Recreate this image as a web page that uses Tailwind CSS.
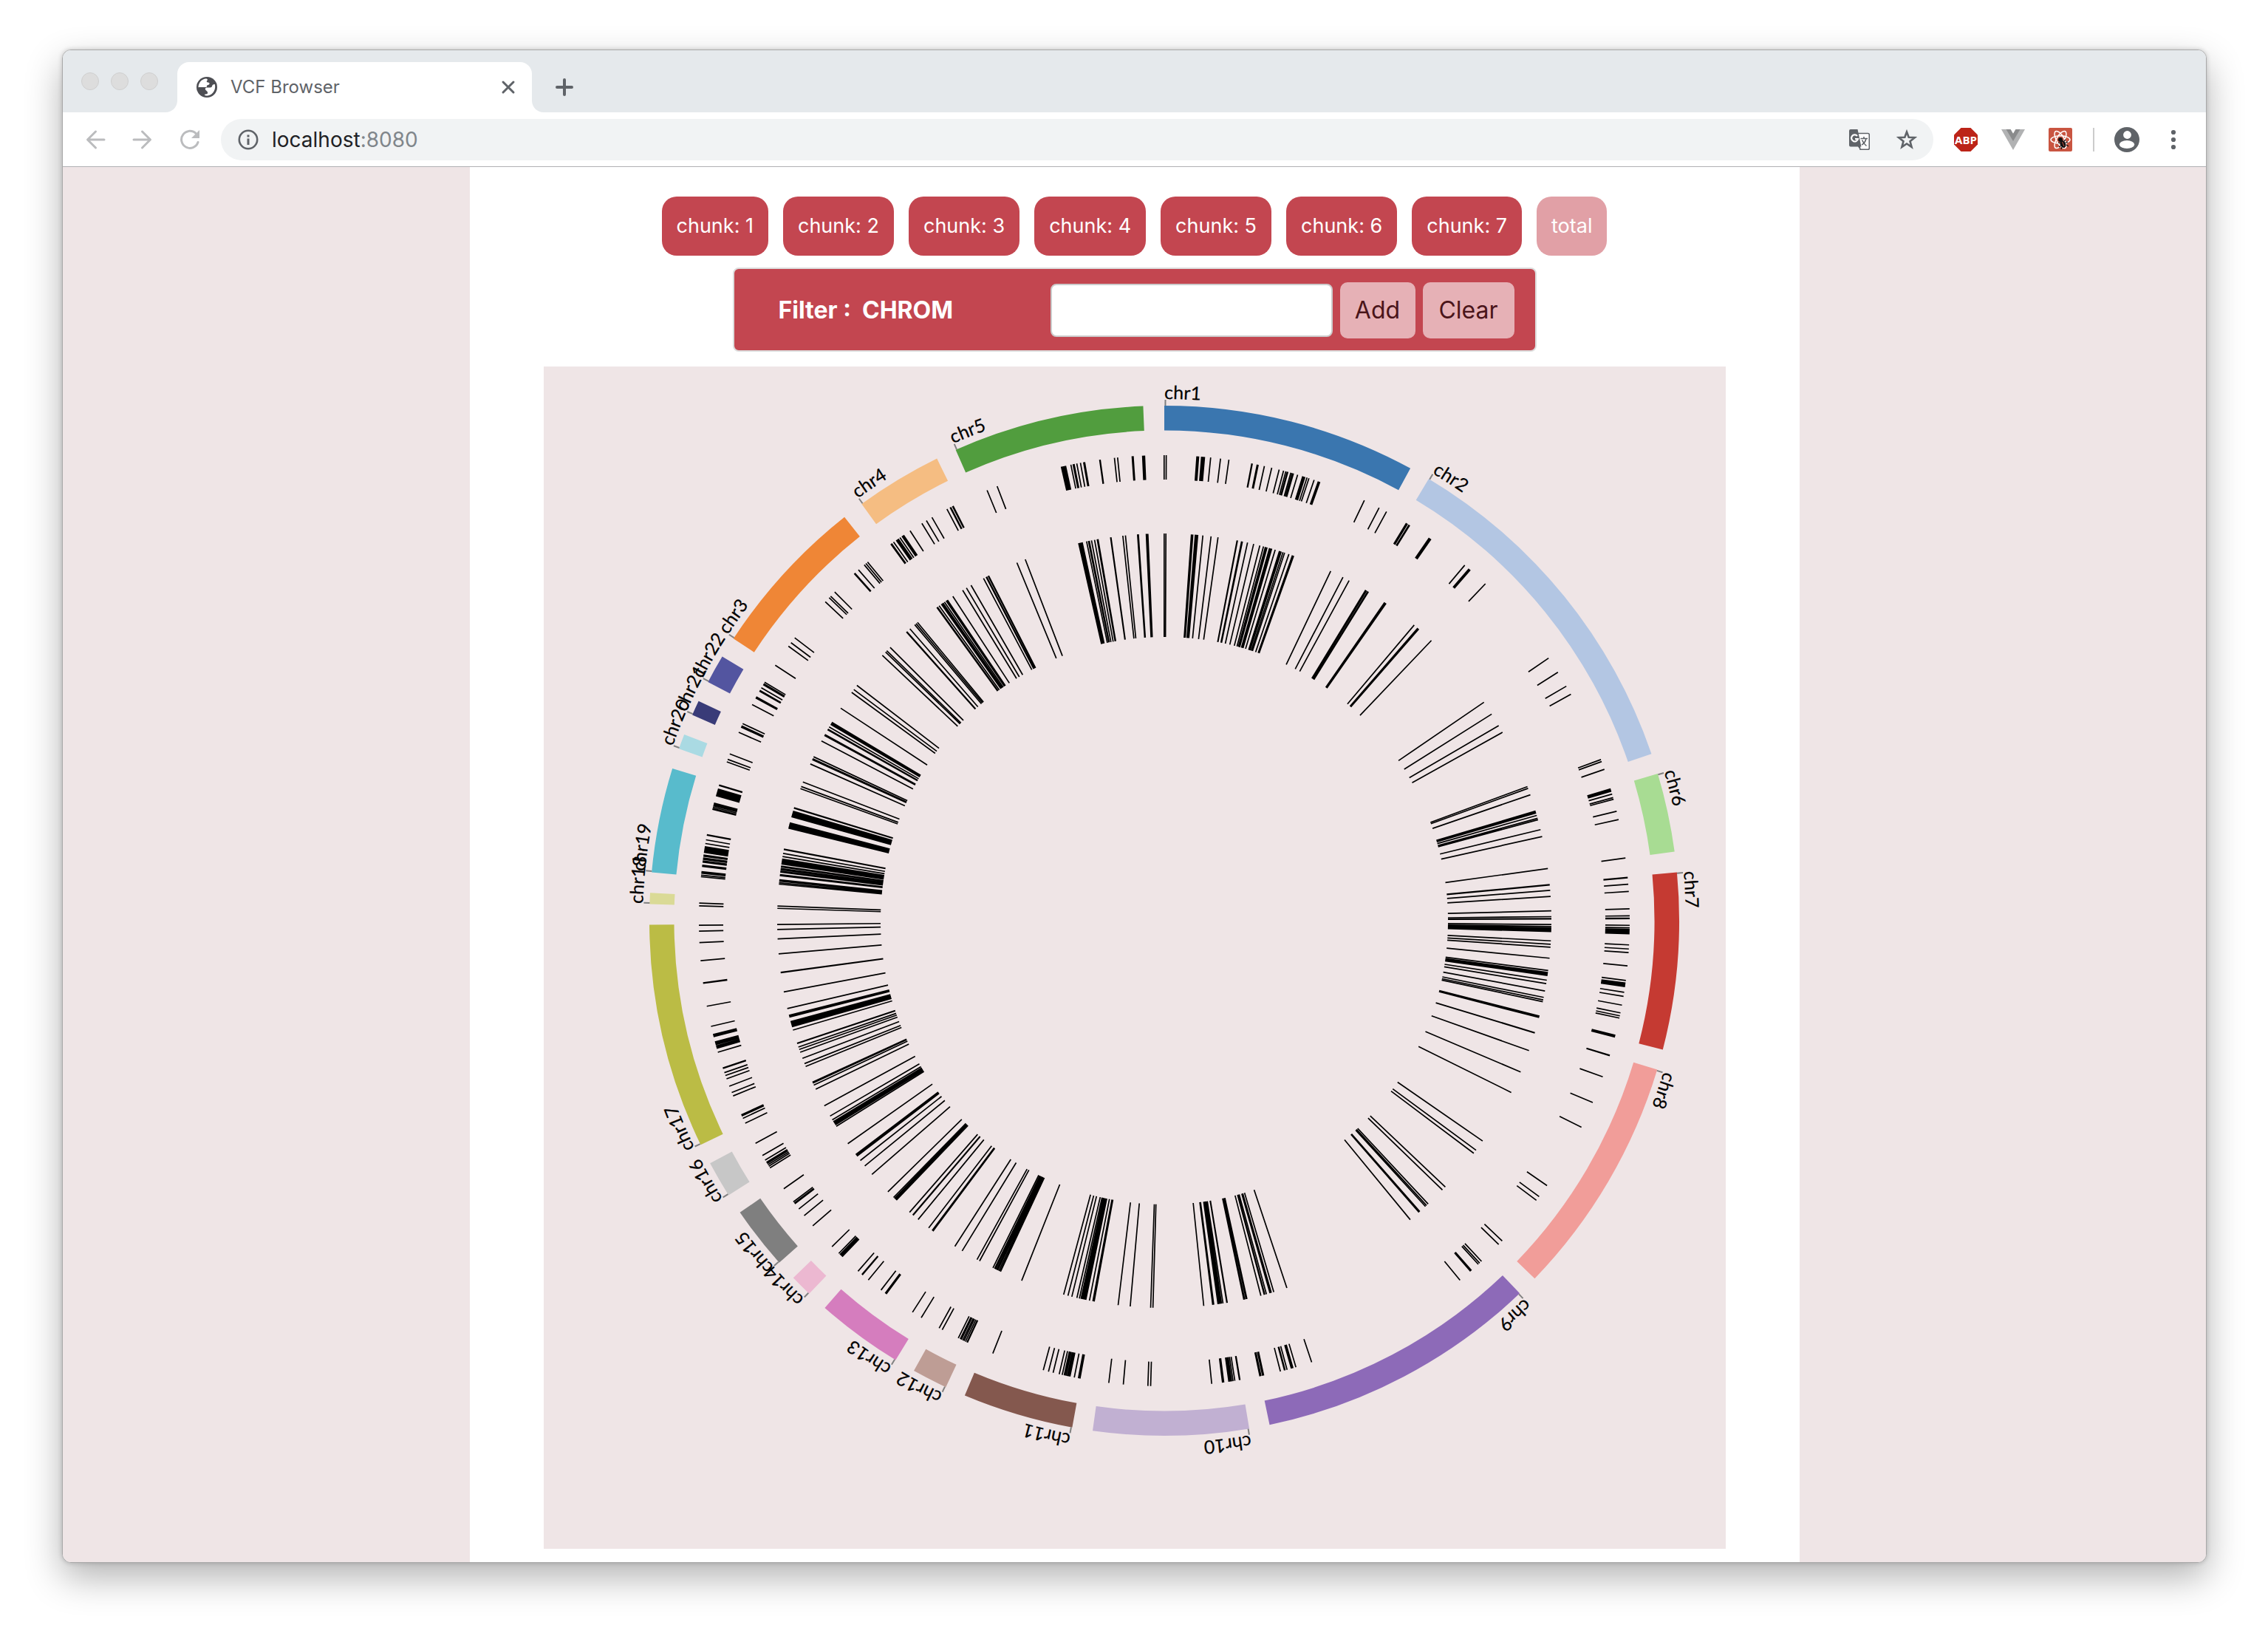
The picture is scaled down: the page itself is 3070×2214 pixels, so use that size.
<!DOCTYPE html>
<html lang="en">
<head>
<meta charset="utf-8">
<meta name="viewport" content="width=device-width, initial-scale=1">
<title>VCF Browser</title>
<script src="https://cdn.jsdelivr.net/npm/@tailwindcss/browser@4"></script>
</head>
<body class="min-h-screen bg-white pt-[67px] pr-[83px] pb-[100px] pl-[84px] font-['Inter',sans-serif]">
<div class="overflow-hidden rounded-xl border border-[#a9a9a9] bg-white shadow-[0_20px_50px_rgba(0,0,0,0.3),0_0_6px_rgba(0,0,0,0.2)]">

  <!-- Tab strip -->
  <header>
    <div class="flex h-[84px] items-end bg-[#e5e9ec]">
      <div class="flex h-[84px] w-[155px] items-center gap-4 pl-[25px]">
        <span class="size-6 rounded-full border border-[#cfcfcf] bg-[#dddddd]"></span>
        <span class="size-6 rounded-full border border-[#cfcfcf] bg-[#dddddd]"></span>
        <span class="size-6 rounded-full border border-[#cfcfcf] bg-[#dddddd]"></span>
      </div>
      <svg class="size-4 -ml-4 text-white" viewBox="0 0 16 16" aria-hidden="true"><path fill="currentColor" d="M16 0v16H0C9 16 16 9 16 0z"/></svg>
      <div class="flex h-[68px] w-[480px] items-center rounded-t-2xl bg-white pr-[22px] pl-[26px]">
        <svg class="size-7" viewBox="0 0 28 28" aria-hidden="true">
          <circle cx="14" cy="14" r="14" fill="#4d4e53"/>
          <path fill="#fff" d="M2.500 14.500C2.500 8.500 6.500 3.600 12 2.600c1.500-.3 3 .2 2.800 1.400-.2 1-1 1.400-1 2.400 0 1.200 2.600.7 3.600 2 .8 1.200-.5 2.200-2 2.600-1.600.4-1.600 1.600-1.600 3H3z"/>
          <path fill="#fff" d="M24.800 10c1.700 6.500-2 13.800-8.800 15.300-1.600.4-4.600.2-5-.8-.5-1.600 3.600-.4 4.100-2.500.4-1.800-1.400-2.600-2.800-4.200-1-1.300-.5-3 1.200-3.300h5c1.300 0 2.200-.5 2.500-1.700.4-1.600 1-2.800 3.800-2.800z"/>
        </svg>
        <span class="ml-[18px] flex-1 text-2xl text-[#5f6368]">VCF Browser</span>
        <button type="button" aria-label="Close tab"><svg class="size-5" viewBox="0 0 20 20" fill="none" stroke="#5f6368" stroke-width="3" stroke-linecap="round"><path d="M3 3l14 14M17 3L3 17"/></svg></button>
      </div>
      <svg class="size-4 text-white" viewBox="0 0 16 16" aria-hidden="true"><path fill="currentColor" d="M0 0v16h16C7 16 0 9 0 0z"/></svg>
      <button type="button" aria-label="New tab" class="mb-[22px] ml-4"><svg class="size-6" viewBox="0 0 24 24" fill="none" stroke="#5f6368" stroke-width="4" stroke-linecap="round"><path d="M12 2v20M2 12h20"/></svg></button>
    </div>

    <!-- Toolbar -->
    <div class="flex h-[74px] items-center border-b border-[#b0b1b3] bg-white pr-[30px] pl-[30px]">
      <nav class="flex items-center gap-9" aria-label="History">
        <button type="button" aria-label="Back"><svg class="size-7" viewBox="0 0 28 28" fill="none" stroke="#bbbcbe" stroke-width="3" stroke-linecap="round" stroke-linejoin="round"><path d="M26 14H4M14.500 3L3.500 14l11 11"/></svg></button>
        <button type="button" aria-label="Forward"><svg class="size-7" viewBox="0 0 28 28" fill="none" stroke="#bbbcbe" stroke-width="3" stroke-linecap="round" stroke-linejoin="round"><path d="M2 14h22M13.500 3l11 11-11 11"/></svg></button>
        <button type="button" aria-label="Reload"><svg class="size-7" viewBox="0 0 28 28" fill="none"><path d="M25 17.500A11.500 11.500 0 1 1 22.500 6" stroke="#bbbcbe" stroke-width="3" stroke-linecap="round"/><path fill="#bbbcbe" d="M27 1v11H16z"/></svg></button>
      </nav>
      <div class="ml-7 flex h-14 flex-1 items-center rounded-full bg-[#f1f3f4] pr-[22px] pl-[23px]">
        <svg class="size-7" viewBox="0 0 28 28" aria-hidden="true"><circle cx="14" cy="14" r="12.200" fill="none" stroke="#5f6368" stroke-width="2.600"/><path fill="#5f6368" d="M12.500 7.500h3v3h-3zM12.500 12.500h3v8.500h-3z"/></svg>
        <p class="ml-[18px] flex-1 text-[28px] leading-9 text-[#80868b]"><span class="text-[#202124]">localhost</span>:8080</p>
        <button type="button" aria-label="Translate this page"><svg class="size-7" viewBox="0 0 28 28">
          <path fill="#fff" stroke="#5f6368" stroke-width="1.600" d="M11 5.500h14.500a1.800 1.800 0 0 1 1.800 1.800v18.200a1.800 1.800 0 0 1-1.800 1.800H15z"/>
          <path fill="#5f6368" d="M2 0h9.500l5 23.500H2a2 2 0 0 1-2-2V2a2 2 0 0 1 2-2zM15 23.500h-3l3 4z"/>
          <path fill="none" stroke="#fff" stroke-width="2.200" d="M11 9a4.500 4.500 0 1 0 1 4H8"/>
          <path fill="none" stroke="#5f6368" stroke-width="1.600" d="M15.500 12.500H25M20 10v2.500M23 12.500c-1 4.500-3 7-6 8.500M17.500 14.500c1.500 3.500 3.500 6 6 8"/>
        </svg></button>
        <button type="button" aria-label="Bookmark this page" class="ml-9"><svg class="size-7" viewBox="0 0 28 28" fill="none" stroke="#5f6368" stroke-width="2.600"><path d="M14 3.500l2.700 7.300 8 .4-6.200 5 2.100 7.700-6.600-4.400-6.600 4.400 2.100-7.700-6.200-5 8-.4z"/></svg></button>
      </div>
      <div class="ml-7 flex items-center gap-8">
        <button type="button" aria-label="Adblock Plus"><svg class="size-8" viewBox="0 0 32 32"><path fill="#bc2418" d="M9.500 0h13L32 9.500v13L22.500 32h-13L0 22.500v-13z"/><text x="16" y="21.500" text-anchor="middle" fill="#fff" class="font-['Open_Sans',sans-serif] text-[15px] font-bold">ABP</text></svg></button>
        <button type="button" aria-label="Vue devtools"><svg class="size-8" viewBox="0 0 32 32"><path fill="#b1b2b3" d="M0 2h12.500l3.500 6 3.500-6H32L16 30z"/><path fill="#8a8b8c" d="M6.500 2h6l3.500 6 3.500-6h6L16 18z"/></svg></button>
        <button type="button" aria-label="React developer tools"><svg class="size-8" viewBox="0 0 32 32"><rect width="32" height="32" rx="2" fill="#c95541"/><g fill="none" stroke="#fff" stroke-width="1.500"><ellipse cx="16" cy="16" rx="13" ry="5.200"/><ellipse cx="16" cy="16" rx="13" ry="5.200" transform="rotate(60 16 16)"/><ellipse cx="16" cy="16" rx="13" ry="5.200" transform="rotate(120 16 16)"/></g><g fill="#111" stroke="#111" stroke-width="1.300"><circle cx="16" cy="16" r="2.300"/><ellipse cx="19.500" cy="22" rx="3" ry="4.500" transform="rotate(-25 19.500 22)"/><path d="M13 20l3 1M14 26l3-2M26 19l-3 1M27 25l-3-2M17 29l1-3M23 16l-2 2"/></g><path stroke="#c95541" d="M18.500 19l2.500 6"/></svg></button>
      </div>
      <span class="mr-[27px] ml-7 h-8 w-[2px] bg-[#cccccc]"></span>
      <button type="button" aria-label="Profile"><svg class="size-[34px]" viewBox="0 0 34 34"><circle cx="17" cy="17" r="17" fill="#5f6368"/><circle cx="17.500" cy="10.500" r="5.400" fill="#fff"/><ellipse cx="17" cy="23.500" rx="10.200" ry="5.400" fill="#fff"/></svg></button>
      <button type="button" aria-label="Menu" class="ml-8"><svg class="size-7" viewBox="0 0 28 28" fill="#5f6368"><circle cx="14" cy="4" r="3.100"/><circle cx="14" cy="14" r="3.100"/><circle cx="14" cy="24" r="3.100"/></svg></button>
    </div>
  </header>

  <!-- Page -->
  <div class="bg-[#efe5e6]">
    <main class="mx-auto max-w-[1800px] bg-white px-16 pt-10 pb-[18px] xl:px-[100px]">
      <nav class="flex flex-wrap justify-center gap-5 text-[27px] leading-10 text-white" aria-label="Chunks">
        <button type="button" class="rounded-[20px] bg-[#c34650] p-5">chunk: 1</button>
        <button type="button" class="rounded-[20px] bg-[#c34650] p-5">chunk: 2</button>
        <button type="button" class="rounded-[20px] bg-[#c34650] p-5">chunk: 3</button>
        <button type="button" class="rounded-[20px] bg-[#c34650] p-5">chunk: 4</button>
        <button type="button" class="rounded-[20px] bg-[#c34650] p-5">chunk: 5</button>
        <button type="button" class="rounded-[20px] bg-[#c34650] p-5">chunk: 6</button>
        <button type="button" class="rounded-[20px] bg-[#c34650] p-5">chunk: 7</button>
        <button type="button" class="rounded-[20px] bg-[#e1a0a6] p-5">total</button>
      </nav>

      <form class="mx-auto mt-4 flex h-[114px] max-w-[1088px] items-center rounded-lg border-2 border-[#dddddd] bg-[#c34650] pt-[2px] pr-7 pl-[60px] text-[32px] leading-10">
        <label for="chrom" class="flex-1 font-bold text-white">Filter :&nbsp; CHROM</label>
        <input id="chrom" type="text" class="h-[72px] w-[382px] rounded-lg border-2 border-[#cccccc] bg-white px-4">
        <button type="button" class="ml-[10px] h-[76px] w-[102px] rounded-[10px] bg-[#e6b1b6] text-[#4a151a]">Add</button>
        <button type="button" class="ml-[10px] h-[76px] w-[124px] rounded-[10px] bg-[#e6b1b6] text-[#4a151a]">Clear</button>
      </form>

      <figure class="mt-5 aspect-square w-full bg-[#efe5e6]">
        <svg id="circos" class="size-full" viewBox="0 0 1600 1600" role="img" aria-label="Variants by chromosome">
          <g id="plot" transform="translate(840 750)"></g>
        </svg>
      </figure>
    </main>
  </div>
</div>

<script>
// Chromosome arcs: name, start and end in degrees clockwise from the top, colour
const chromosomes = [
  ['chr1', 0, 28.55, '#3a76af'], ['chr2', 30.9, 71.1, '#b3c6e3'], ['chr6', 73.4, 82.3, '#a8dc93'],
  ['chr7', 84.6, 104.5, '#c53a32'], ['chr8', 106.8, 134, '#f19d99'], ['chr9', 136.35, 168.2, '#8d6ab8'],
  ['chr10', 170.5, 188, '#c1b0d2'], ['chr11', 190.3, 202.8, '#84584e'], ['chr12', 205.1, 209.1, '#be9d95'],
  ['chr13', 211.45, 221.25, '#d57dbe'], ['chr14', 223.6, 226.1, '#ecb8d1'], ['chr15', 228.4, 235.5, '#7f7f7f'],
  ['chr16', 237.8, 241.9, '#c7c7c7'], ['chr17', 244.2, 269.55, '#bbbc45'], ['chr18', 271.85, 273.1, '#dada96'],
  ['chr19', 275.4, 287.2, '#58bbcc'], ['chr20', 289.5, 291.2, '#aadae3'], ['chr21', 293.55, 295.25, '#393b78'],
  ['chr22', 297.6, 300.85, '#5355a0'], ['chr3', 303.2, 321.6, '#ef8636'], ['chr4', 324, 333.8, '#f5bd82'],
  ['chr5', 336.1, 357.65, '#519d3e']
];

// Variant positions in degrees; a pair is an unbroken run of neighbours
const variants = [
  -0.02, 0.24, [4.02, 4.23], [4.6, 4.96], 5.72, 6.94, 7.98, [10.84, 10.9], [11.52, 11.64], 12.42, 13.35, 14.29,
  14.85, 15.14, [15.32, 15.4], 15.78, 15.95, 16.11, 16.65, 17.31, 17.44, 17.58, 17.86, 18.11, 18.78, [19.33, 19.52],
  25.46, 27.49, 28.52, [31.35, 31.5], [31.73, 31.82], [34.7, 34.95], 40.21, [40.9, 41.1], 43.63,
  55.66, 57.75, 59.75, 60.89, 69.74, 70.01, 71.02, [73.55, 73.85], 74.22, 74.66, 74.88, 76.4, 77.45,
  82.26, [84.65, 84.71], 85.5, 86.4, 88.54, 89.4, [89.68, 89.74], 90.57, 90.87, [91.07, 91.6], 92.98, 93.48, 93.93, 95.56,
  97.38, [97.7, 98.13], 98.84, 99.35, 100.45, 101.42, 101.79, 102.07, [104.25, 104.48], [106.8, 106.85], 109.59,
  112.99, 116.33, 124.68, 126.35, 126.92, 133.45, 134.07, 137.03, 137.35, 137.57, [138.7, 138.85], 140.55,
  161.54, 163.57, [163.95, 164.15], 164.7, [164.95, 165.03], 165.55, [167.67, 167.8], [168.01, 168.14], [170.64, 170.7],
  171.28, 171.5, [171.68, 172.02], [172.66, 172.81], 174.15, 181.68, 182.02, 185.05, 186.85,
  [190.44, 190.63], 191.15, [191.7, 192.03], 192.2, [192.36, 192.42], 192.67, 193.05, 193.82, 194.41, 195.07, 201.62,
  [205.03, 205.09], 205.29, 205.49, 205.66, [205.86, 206], 206.27, 208.5, 208.93, 211.48, 212.75, [216.7, 216.84],
  217.49, 219.49, [220.46, 220.52], 221.15, [223.8, 224.18], 224.38, 225.56, 229.05, 230.69, 231.74, [232.54, 232.64], 232.84,
  234.84, 237.92, 238.18, 238.38, 238.58, 238.74, 239.06, 239.7, 241.44, 244.21, 244.88, [245.2, 245.35],
  247.89, 248.34, 249.18, 250.14, 250.57, 250.95, [251.5, 251.56], 253.59, [254.1, 254.39], [254.57, 254.9],
  [255.58, 255.84], 256.88, 259.41, [262.27, 262.33], 265.08, 267.3, 268.71, 269.44, 271.83, 272.17,
  275.42, 275.62, [275.86, 276.06], [276.7, 276.85], [277.23, 277.37], 277.58, 277.74, [277.98, 278.11], [278.44, 279.15],
  279.55, 280.01, [280.6, 280.66], [283.85, 283.95], 284.13, 284.3, 284.47, 284.63, [285.58, 286.43], [286.9, 286.96],
  289.95, 290.28, 290.99, 293.88, [294.58, 294.74], 295.05, 297.67, [298.6, 298.74], [299.55, 299.65], 300.02,
  [300.48, 300.62], 300.82, 303.29, 306.14, 306.67, 307.43, 313.25, 313.94, 314.2, 314.91, [318.23, 318.31], 318.92,
  319.86, 320.12, 320.39, [324.02, 324.12], 324.43, [324.84, 325.13], 325.39, [325.7, 325.93], 326.89, 328.61, 329.26,
  330.05, 332.16, [332.6, 332.68], [332.93, 333.01], 337.62, 338.95, [347.22, 347.75], 348.42, [348.7, 348.82], 349.16,
  349.62, [350.02, 350.14], [352.02, 352.08], 353.85, 354.24, [356.04, 356.16], [357.33, 357.57]
];

const NS = 'http://www.w3.org/2000/svg';
const plot = document.getElementById('plot');
const point = (deg, r) => {
  const a = deg * Math.PI / 180;
  return (r * Math.sin(a)).toFixed(2) + ' ' + (-r * Math.cos(a)).toFixed(2);
};
const add = (tag, attrs, parent = plot) => {
  const el = document.createElementNS(NS, tag);
  for (const key in attrs) el.setAttribute(key, attrs[key]);
  return parent.appendChild(el);
};

const OUTER = 697, INNER = 663.5, LABEL = 706, LINE = 1.7;
for (const [name, start, end, colour] of chromosomes) {
  add('path', { fill: colour, d: `M${point(start, OUTER)}A${OUTER} ${OUTER} 0 0 1 ${point(end, OUTER)}L${point(end, INNER)}A${INNER} ${INNER} 0 0 0 ${point(start, INNER)}Z` });
  add('path', { stroke: '#808080', 'stroke-width': 2, d: `M${point(start + 0.12, OUTER)}L${point(start + 0.12, OUTER + 8)}` });
}
for (const [name, start] of chromosomes) {
  add('path', { id: 'arc-' + name, fill: 'none', d: `M${point(start, LABEL)}A${LABEL} ${LABEL} 0 0 1 ${point(start + 15, LABEL)}` });
  const text = add('text', { class: "font-['Lato',sans-serif] text-[25px] fill-black stroke-black stroke-[0.2px]" });
  add('textPath', { href: '#arc-' + name }, text).textContent = name;
}

// Widen a run by half a line on each side, at both radii
const bar = (a, b, r0, r1) => {
  const h0 = LINE / 2 / r0 * 180 / Math.PI, h1 = LINE / 2 / r1 * 180 / Math.PI;
  return `M${point(a - h0, r0)}L${point(a - h1, r1)}L${point(b + h1, r1)}L${point(b + h0, r0)}Z`;
};
let d = '';
for (const v of variants) {
  const [a, b] = Array.isArray(v) ? v : [v, v];
  d += bar(a, b, 597, 630) + bar(a, b, 384, 524);
}
add('path', { d, fill: '#000' });
</script>
</body>
</html>
